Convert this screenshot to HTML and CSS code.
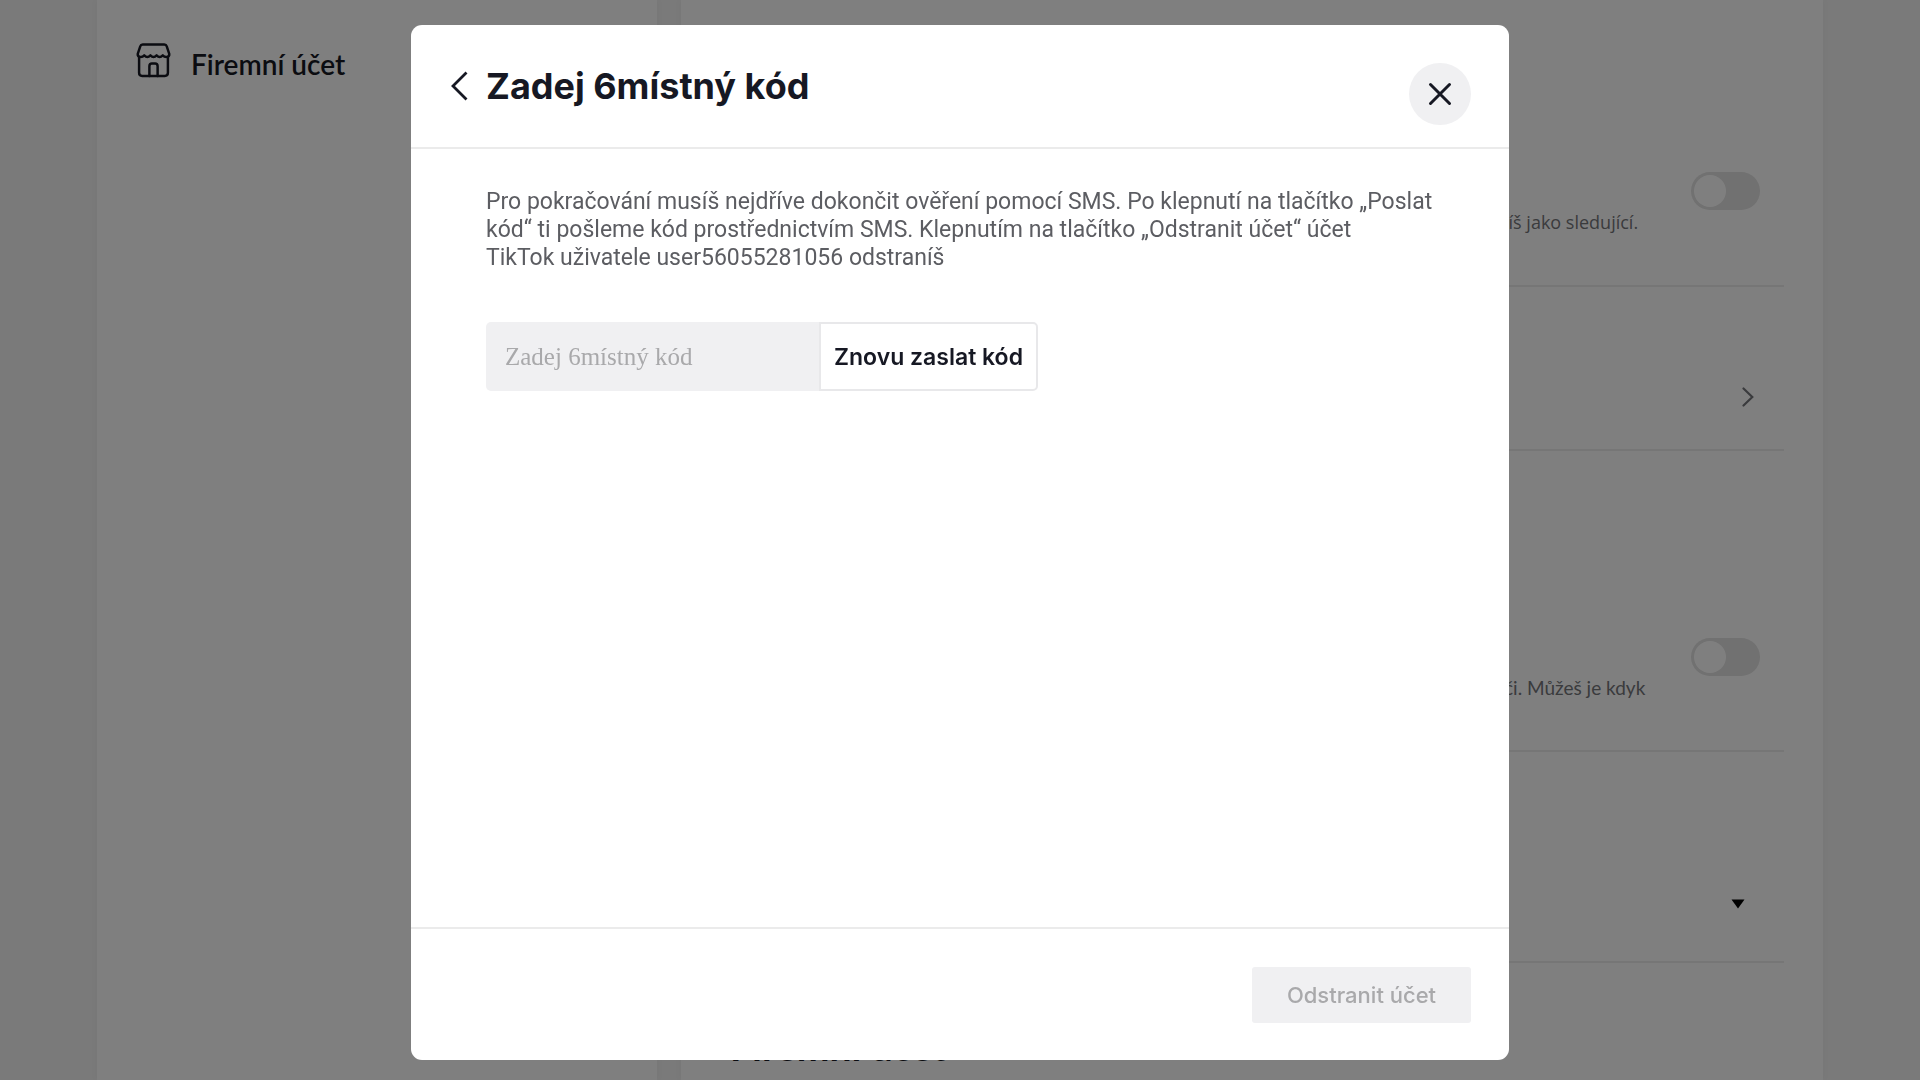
FILE: index.html
```html
<!DOCTYPE html>
<html lang="cs">
<head>
<meta charset="UTF-8" />
<meta name="viewport" content="width=device-width, initial-scale=1.0" />
<title>Firemní účet</title>
<link rel="stylesheet" href="styles.css">
</head>
<body>
<div class="page">
  <nav class="sidebar">
    <a class="nav-link" href="#business">
      <svg class="nav-icon" viewBox="0 0 34 34" fill="none" stroke="currentColor" stroke-width="2.4" stroke-linejoin="round" stroke-linecap="round">
        <path d="M6.5 1.500h21q1.800 0 2.300 1.600l2.500 7.400q.300 2.600-2.300 3-2.300 .300-4-1.500-1.500 1.500-3 1.500t-3-1.500q-1.500 1.500-3 1.500t-3-1.500q-1.500 1.500-3 1.500t-3-1.500q-1.700 1.800-4 1.500-2.600-.400-2.300-3l2.500-7.400Q4.700 1.500 6.500 1.500z" />
        <path d="M3 13.500V29q0 3 3 3h22q3 0 3-3V13.500" />
        <path d="M13 32V22.500q0-2.500 2.500-2.500h3q2.500 0 2.500 2.500V32" />
      </svg>
      <span>Firemní účet</span>
    </a>
  </nav>
  <main class="settings">
    <section class="row row-privacy">
      <label class="row-text humanist" for="private">líš jako sledující.</label>
      <input class="switch" type="checkbox" id="private">
    </section>
    <section class="row row-link">
      <button class="icon-button" type="button" aria-label="Otevřít">
        <svg width="12" height="20" viewBox="0 0 12 20" fill="none" stroke="currentColor" stroke-width="2.200" stroke-linecap="round"><path d="M1.500 1.500 10.300 10l-8.800 8.500" /></svg>
      </button>
    </section>
    <section class="row row-data">
      <label class="row-text" for="ads">či. Můžeš je kdyk</label>
      <input class="switch" type="checkbox" id="ads">
    </section>
    <section class="row row-select">
      <button class="icon-button caret" type="button" aria-label="Rozbalit">
        <svg width="14" height="10" viewBox="0 0 14 10" fill="#000"><path d="M.500 .500h13L7 9.500z" /></svg>
      </button>
    </section>
    <h2 class="section-title">Firemní účet</h2>
  </main>
</div>

<div class="overlay">
  <div class="modal" role="dialog" aria-labelledby="modal-title">
    <header class="modal-header">
      <button class="back" type="button" aria-label="Zpět">
        <svg width="18" height="30" viewBox="0 0 18 30" fill="none" stroke="currentColor" stroke-width="2.800"><path d="M16.500 1.500 3 15l13.500 13.500" /></svg>
      </button>
      <h1 class="modal-title" id="modal-title">Zadej 6místný kód</h1>
      <button class="close" type="button" aria-label="Zavřít">
        <svg width="24" height="24" viewBox="0 0 24 24" fill="none" stroke="currentColor" stroke-width="3" stroke-linecap="round"><path d="M2.500 2.500l19 19M21.500 2.500l-19 19" /></svg>
      </button>
    </header>
    <div class="modal-body">
      <p class="message">Pro pokračování musíš nejdříve dokončit ověření pomocí SMS. Po klepnutí na tlačítko „Poslat kód“ ti pošleme kód prostřednictvím SMS. Klepnutím na tlačítko „Odstranit účet“ účet<br>TikTok uživatele user56055281056 odstraníš</p>
      <form class="code-form">
        <input class="code-input" type="text" inputmode="numeric" maxlength="6" placeholder="Zadej 6místný kód" aria-label="Zadej 6místný kód">
        <button class="resend" type="button">Znovu zaslat kód</button>
      </form>
    </div>
    <footer class="modal-footer">
      <button class="delete" type="button" disabled>Odstranit účet</button>
    </footer>
  </div>
</div>
</body>
</html>
```

FILE: styles.css
```css
* {
  box-sizing: border-box;
}
body {
  margin: 0;
  height: 100vh;
  overflow: hidden;
  font-family: Inter, Roboto, sans-serif;
  background-color: #f4f4f4;
  color: #161823;
}
button {
  padding: 0;
  border: none;
  background: none;
  font-family: inherit;
  color: inherit;
  cursor: pointer;
}
svg {
  display: block;
}
.page {
  display: flex;
  gap: 24px;
  min-height: 100vh;
  padding: 0 97px;
}
.sidebar {
  flex: 0 0 560px;
  padding: 40px 39px;
  background-color: #fff;
  box-shadow: 0 0 8px rgba(0, 0, 0, 0.04);
}
.nav-link {
  display: flex;
  align-items: center;
  gap: 20px;
  color: inherit;
  text-decoration: none;
  font-family: Lato, sans-serif;
  font-size: 28px;
  font-weight: 600;
  line-height: 48px;
}
.nav-icon {
  width: 35px;
  height: 35px;
  margin-bottom: 8px;
}
.settings {
  flex: 1;
  padding: 0 39px;
  background-color: #fff;
  box-shadow: 0 0 8px rgba(0, 0, 0, 0.04);
}
.row {
  display: flex;
  justify-content: flex-end;
  padding: 0 24px;
  border-bottom: 2px solid #ececec;
}
.row-privacy {
  padding-top: 172px;
  padding-bottom: 51px;
}
.row-link {
  padding-top: 100px;
  padding-bottom: 42px;
}
.row-data {
  padding-top: 187px;
  padding-bottom: 50px;
}
.row-select {
  padding-top: 147px;
  padding-bottom: 52px;
}
.row-text {
  width: 187px;
  padding-top: 38px;
  font-family: Lato, sans-serif;
  font-size: 19px;
  line-height: 24px;
  white-space: nowrap;
  color: #75767b;
}
.humanist {
  font-family: "Open Sans", sans-serif;
  font-size: 18px;
}
.switch {
  appearance: none;
  width: 69px;
  height: 38px;
  margin: 0;
  padding: 3px;
  border-radius: 19px;
  background-color: #e2e2e2;
}
.switch::before {
  content: "";
  display: block;
  width: 32px;
  height: 32px;
  border-radius: 50%;
  background-color: #fff;
}
.icon-button {
  padding: 0 6px;
  color: #75767b;
}
.caret {
  padding: 0 15px;
}
.section-title {
  margin: 0;
  padding: 59px 10px 0;
  font-family: Lato, sans-serif;
  font-size: 39px;
  font-weight: 700;
  line-height: 48px;
}
.overlay {
  position: fixed;
  inset: 0;
  display: flex;
  justify-content: center;
  align-items: center;
  padding: 25px 0 20px;
  background-color: rgba(0, 0, 0, 0.5);
}
.modal {
  display: flex;
  flex-direction: column;
  width: 1098px;
  max-width: 90%;
  height: 100%;
  border-radius: 11px;
  background-color: #fff;
}
.modal-header {
  display: flex;
  align-items: flex-start;
  padding: 38px 38px 22px 39px;
  border-bottom: 2px solid #ebebeb;
}
.back {
  margin-right: 18px;
  padding-top: 8px;
}
.modal-title {
  flex: 1;
  margin: 0;
  font-size: 36px;
  font-weight: 700;
  line-height: 46px;
}
.close {
  display: flex;
  justify-content: center;
  align-items: center;
  width: 62px;
  height: 62px;
  border-radius: 50%;
  background-color: #f0f0f2;
}
.modal-body {
  flex: 1;
  padding: 39px 75px;
}
.message {
  margin: 0 0 50px;
  font-family: Roboto, sans-serif;
  font-size: 23px;
  line-height: 28px;
  color: #5c5d62;
}
.code-form {
  display: flex;
}
.code-input {
  width: 333px;
  height: 69px;
  padding: 0 19px;
  border: none;
  border-radius: 5px 0 0 5px;
  background-color: #f0f0f2;
  font-family: "Liberation Serif", serif;
  font-size: 25px;
}
.code-input::placeholder {
  color: #a9a9ab;
}
.resend {
  width: 219px;
  border: 2px solid #e8e8ea;
  border-radius: 0 5px 5px 0;
  font-size: 23px;
  font-weight: 600;
  white-space: nowrap;
}
.modal-footer {
  display: flex;
  justify-content: flex-end;
  padding: 38px 38px 37px;
  border-top: 2px solid #ebebeb;
}
.delete {
  width: 219px;
  height: 56px;
  border-radius: 3px;
  background-color: #f0f0f2;
  font-size: 22px;
  font-weight: 500;
  color: #a9a9ab;
}
```
